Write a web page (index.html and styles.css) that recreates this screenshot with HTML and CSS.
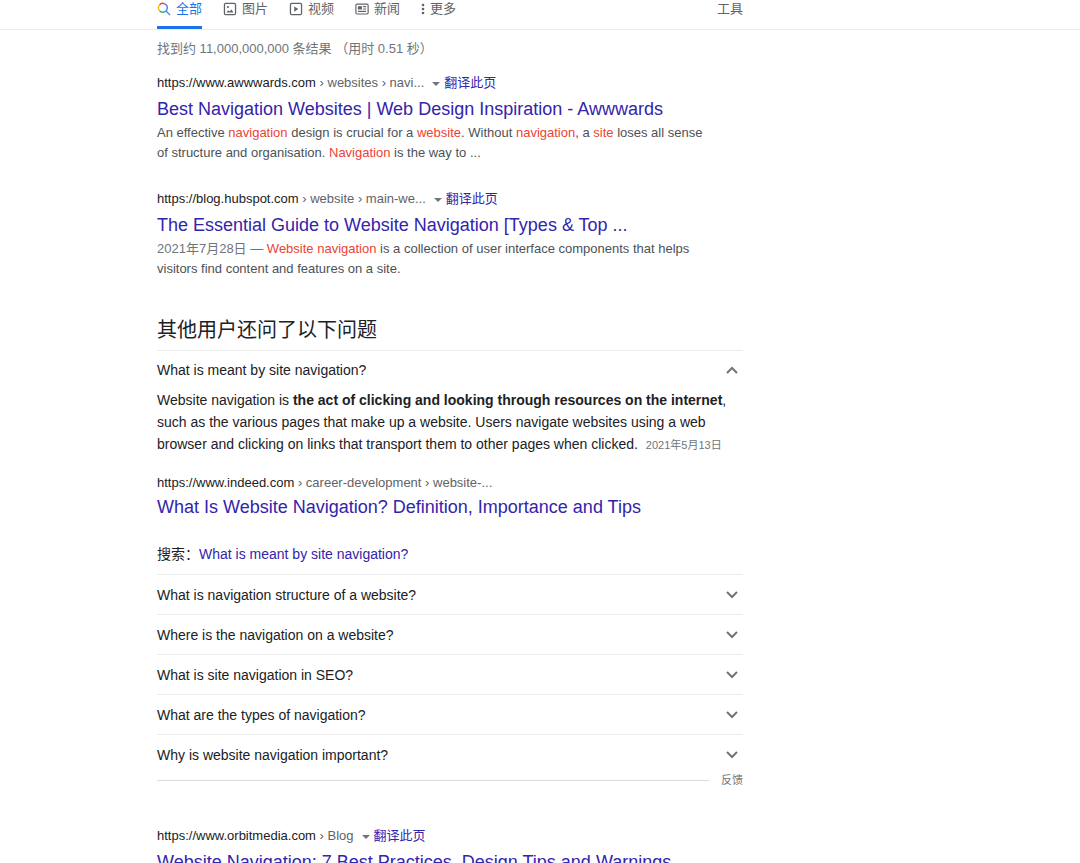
FILE: index.html
```
<!DOCTYPE html>
<html lang="zh-CN">
<head>
    <meta charset="UTF-8">
    <meta name="viewport" content="width=device-width, initial-scale=1.0">
    <title>website navigation - 搜索</title>
    <link rel="stylesheet" href="styles.css">
</head>
<body>
    <header class="topbar">
        <nav class="tabs">
            <a href="#" class="tab active">
                <svg class="icon" viewBox="0 0 24 24" fill="none" stroke-width="2.4">
                    <path d="M4.2 5.3a7.6 7.6 0 0 1 9-2.2" stroke="#ea4335"/>
                    <path d="M4.2 5.3a7.6 7.6 0 0 0 0 9.4" stroke="#fbbc04"/>
                    <path d="M4.2 14.7a7.6 7.6 0 0 0 6 2.9" stroke="#34a853"/>
                    <path d="M13.2 3.1a7.6 7.6 0 0 1-3 14.5M15.4 15.4L22.5 22.5" stroke="#4285f4"/>
                </svg>
                全部
            </a>
            <a href="#" class="tab">
                <svg class="icon" viewBox="0 0 24 24" fill="none" stroke="currentColor" stroke-width="2.2">
                    <rect x="2.5" y="2.5" width="19" height="19" rx="2"/>
                    <path d="M6 18l3-4 2.4 2.4 3-3.4 3.6 5z" fill="currentColor" stroke="none"/>
                    <circle cx="8.5" cy="8.5" r="1.8" fill="currentColor" stroke="none"/>
                </svg>
                图片
            </a>
            <a href="#" class="tab">
                <svg class="icon" viewBox="0 0 24 24" fill="none" stroke="currentColor" stroke-width="2.2">
                    <rect x="2.5" y="2.5" width="19" height="19" rx="2"/>
                    <path d="M9 7.5v9l7-4.5z" fill="currentColor" stroke="none"/>
                </svg>
                视频
            </a>
            <a href="#" class="tab">
                <svg class="icon" viewBox="0 0 24 24" fill="none" stroke="currentColor" stroke-width="2">
                    <rect x="1.5" y="3.5" width="21" height="17" rx="2"/>
                    <path d="M5 7.2h7v5.6H5z" fill="currentColor" stroke="none"/>
                    <path d="M14 8h5M14 12h5M5 16h14"/>
                </svg>
                新闻
            </a>
            <a href="#" class="tab more">
                <svg class="dots" viewBox="0 0 4 14" fill="currentColor">
                    <circle cx="2" cy="3" r="1.3"/>
                    <circle cx="2" cy="7" r="1.3"/>
                    <circle cx="2" cy="11" r="1.3"/>
                </svg>
                更多
            </a>
        </nav>
        <button type="button" class="tools">工具</button>
    </header>

    <main class="content">
        <p class="stats">找到约 11,000,000,000 条结果 （用时 0.51 秒）</p>

        <article class="result">
            <div class="source">
                <cite>https://www.awwwards.com <span>› websites › navi...</span></cite>
                <button type="button" class="caret" aria-label="更多选项"></button>
                <a href="#">翻译此页</a>
            </div>
            <h3><a href="#">Best Navigation Websites | Web Design Inspiration - Awwwards</a></h3>
            <p class="snippet">An effective <em>navigation</em> design is crucial for a <em>website</em>. Without <em>navigation</em>, a <em>site</em> loses all sense of structure and organisation. <em>Navigation</em> is the way to ...</p>
        </article>

        <article class="result">
            <div class="source">
                <cite>https://blog.hubspot.com <span>› website › main-we...</span></cite>
                <button type="button" class="caret" aria-label="更多选项"></button>
                <a href="#">翻译此页</a>
            </div>
            <h3><a href="#">The Essential Guide to Website Navigation [Types &amp; Top ...</a></h3>
            <p class="snippet"><span class="date">2021年7月28日 — </span><em>Website navigation</em> is a collection of user interface components that helps visitors find content and features on a site.</p>
        </article>

        <section class="questions">
            <h2>其他用户还问了以下问题</h2>
            <div class="question open">
                <button type="button" aria-expanded="true">
                    What is meant by site navigation?
                    <svg class="chevron" viewBox="0 0 12 8"><path d="M1 7l5-5 5 5"/></svg>
                </button>
                <div class="answer">
                    <p>Website navigation is <b>the act of clicking and looking through resources on the internet</b>, such as the various pages that make up a website. Users navigate websites using a web browser and clicking on links that transport them to other pages when clicked. <span class="answer-date">2021年5月13日</span></p>
                    <div class="source">
                        <cite>https://www.indeed.com <span>› career-development › website-...</span></cite>
                    </div>
                    <h3><a href="#">What Is Website Navigation? Definition, Importance and Tips</a></h3>
                    <p class="search-again">搜索：<a href="#">What is meant by site navigation?</a></p>
                </div>
            </div>
            <div class="question">
                <button type="button" aria-expanded="false">
                    What is navigation structure of a website?
                    <svg class="chevron" viewBox="0 0 12 8"><path d="M1 1l5 5 5-5"/></svg>
                </button>
            </div>
            <div class="question">
                <button type="button" aria-expanded="false">
                    Where is the navigation on a website?
                    <svg class="chevron" viewBox="0 0 12 8"><path d="M1 1l5 5 5-5"/></svg>
                </button>
            </div>
            <div class="question">
                <button type="button" aria-expanded="false">
                    What is site navigation in SEO?
                    <svg class="chevron" viewBox="0 0 12 8"><path d="M1 1l5 5 5-5"/></svg>
                </button>
            </div>
            <div class="question">
                <button type="button" aria-expanded="false">
                    What are the types of navigation?
                    <svg class="chevron" viewBox="0 0 12 8"><path d="M1 1l5 5 5-5"/></svg>
                </button>
            </div>
            <div class="question">
                <button type="button" aria-expanded="false">
                    Why is website navigation important?
                    <svg class="chevron" viewBox="0 0 12 8"><path d="M1 1l5 5 5-5"/></svg>
                </button>
            </div>
            <div class="feedback">
                <a href="#">反馈</a>
            </div>
        </section>

        <article class="result">
            <div class="source">
                <cite>https://www.orbitmedia.com <span>› Blog</span></cite>
                <button type="button" class="caret" aria-label="更多选项"></button>
                <a href="#">翻译此页</a>
            </div>
            <h3><a href="#">Website Navigation: 7 Best Practices, Design Tips and Warnings</a></h3>
        </article>
    </main>
</body>
</html>
```

FILE: styles.css
```
* {
    box-sizing: border-box;
}
body {
    margin: 0;
    background: #fff;
    color: #202124;
    font-family: "Liberation Sans", Arial, "Noto Sans CJK SC", sans-serif;
    font-size: 13px;
    line-height: 18px;
}
h2, h3, p {
    margin: 0;
    font-weight: normal;
}
a {
    color: #3324ab;
    text-decoration: none;
}
a:hover {
    text-decoration: underline;
}
button {
    padding: 0;
    border: none;
    background: none;
    color: inherit;
    font: inherit;
    cursor: pointer;
}
cite, em {
    font-style: normal;
}
.topbar {
    border-bottom: 1px solid #ebebeb;
    padding-left: 157px;
    display: flex;
}
.tabs {
    display: flex;
    gap: 21px;
    flex: 0 1 560px;
}
.tab {
    display: flex;
    gap: 5px;
    height: 29px;
    color: #5f6368;
    border-bottom: 3px solid transparent;
    white-space: nowrap;
}
.tab.active {
    color: #1a73e8;
    border-bottom-color: #1a73e8;
}
.icon {
    width: 14px;
    height: 14px;
    margin-top: 2px;
}
.dots {
    width: 4px;
    height: 14px;
    margin-top: 2px;
}
.tools {
    height: 18px;
    color: #5f6368;
}
.content {
    max-width: 743px;
    padding: 10px 0 0 157px;
}
.stats {
    color: #70757a;
    margin-bottom: 16px;
}
.result {
    max-width: 550px;
    margin-bottom: 27px;
}
.source {
    display: flex;
    align-items: center;
    height: 18px;
}
.source span {
    color: #5f6368;
}
.caret {
    margin: 2px 4px 0 8px;
    border-top: 4px solid #70757a;
    border-left: 4px solid transparent;
    border-right: 4px solid transparent;
}
h3 {
    margin-top: 5px;
    font-size: 18px;
    line-height: 24px;
}
.snippet {
    margin-top: 2px;
    color: #4d5156;
    line-height: 20px;
}
.snippet em {
    color: #ea4335;
}
.date {
    color: #70757a;
}
.questions {
    margin: 37px 0 41px;
}
.questions h2 {
    font-size: 20px;
    line-height: 28px;
    padding-bottom: 6px;
}
.question {
    border-top: 1px solid #ebebeb;
    font-size: 14px;
}
.question button {
    width: 100%;
    height: 39px;
    padding-right: 5px;
    display: flex;
    align-items: center;
    justify-content: space-between;
    text-align: left;
}
.question.open button {
    height: 38px;
}
.chevron {
    width: 12px;
    height: 8px;
    fill: none;
    stroke: #70757a;
    stroke-width: 2;
}
.answer {
    line-height: 22px;
    padding-bottom: 9px;
}
.answer-date {
    margin-left: 4px;
    color: #70757a;
    font-size: 11px;
}
.answer .source {
    margin-top: 18px;
    font-size: 13px;
}
.answer h3 {
    margin-top: 3px;
}
.search-again {
    margin-top: 24px;
}
.feedback {
    display: flex;
    align-items: center;
    gap: 12px;
    font-size: 11px;
    line-height: 12px;
}
.feedback::before {
    content: "";
    flex: 1;
    border-top: 1px solid #dadce0;
}
.feedback a {
    color: #70757a;
}
```
